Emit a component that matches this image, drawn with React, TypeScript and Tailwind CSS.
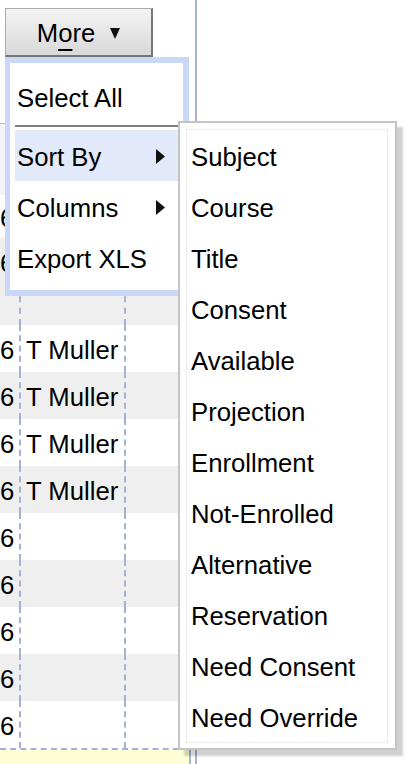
import * as React from "react"

const sortFields = [
  "Subject",
  "Course",
  "Title",
  "Consent",
  "Available",
  "Projection",
  "Enrollment",
  "Not-Enrolled",
  "Alternative",
  "Reservation",
  "Need Consent",
  "Need Override",
]

const rows = [
  { h: "h-[43px]", bg: "bg-white", code: "6", name: "" },
  { h: "h-[47px]", bg: "bg-[#efefef]", code: "6", name: "" },
  { h: "h-[40px]", bg: "bg-[#efefef]", code: "", name: "" },
  { h: "h-[47px]", bg: "bg-white", code: "6", name: "T Muller" },
  { h: "h-[47px]", bg: "bg-[#efefef]", code: "6", name: "T Muller" },
  { h: "h-[47px]", bg: "bg-white", code: "6", name: "T Muller" },
  { h: "h-[47px]", bg: "bg-[#efefef]", code: "6", name: "T Muller" },
  { h: "h-[47px]", bg: "bg-white", code: "6", name: "" },
  { h: "h-[47px]", bg: "bg-[#efefef]", code: "6", name: "" },
  { h: "h-[47px]", bg: "bg-white", code: "6", name: "" },
  { h: "h-[47px]", bg: "bg-[#efefef]", code: "6", name: "" },
  { h: "h-[47px]", bg: "bg-white", code: "6", name: "" },
]

function Arrow() {
  return (
    <svg width="9" height="15" viewBox="0 0 9 15" className="shrink-0 mb-[1px]">
      <polygon points="0,0 9,7.5 0,15" fill="#111" />
    </svg>
  )
}

function MoreMenu() {
  return (
    <div className="absolute left-[5px] top-[57px] w-[184px] border-[6px] border-l-[5px] border-[#cad8f7] bg-white pl-[5px] pt-[6px] pb-[7px]">
      <div className="h-[51px] mt-[2px] px-[2px] pt-[3px] flex items-center">Select All</div>
      <div className="h-[2px] mt-[3px] bg-[#7b7b7b]" />
      <div className="h-[51px] mt-[3px] pl-[2px] pr-[18px] pt-[3px] flex items-center justify-between bg-[#e1e9fb]">
        <span>Sort By</span>
        <Arrow />
      </div>
      <div className="h-[51px] pl-[2px] pr-[18px] pt-[3px] flex items-center justify-between">
        <span>Columns</span>
        <Arrow />
      </div>
      <div className="h-[51px] px-[2px] pt-[3px] flex items-center">Export XLS</div>
    </div>
  )
}

function SortSubmenu() {
  return (
    <div className="absolute left-[178px] top-[121px] w-[219px] border-2 border-[#c4c4c4] bg-white pl-[6px] pr-[7px] pt-[6px] pb-[5px] shadow-[6px_6px_2px_rgba(0,0,0,0.18)]">
      <div className="border border-[#ebebeb]">
        {sortFields.map((f) => (
          <div key={f} className="h-[51px] pl-[4px] pt-[3px] flex items-center whitespace-nowrap">
            {f}
          </div>
        ))}
      </div>
    </div>
  )
}

export default function App() {
  return (
    <div className="relative w-[418px] h-[764px] overflow-hidden bg-white text-[25.7px] text-black font-['Liberation_Sans',Arial,sans-serif]">
      <div className="flex h-full">
        <div className="w-[197px] h-full border-r-2 border-[#a7b3d4] flex flex-col">
          {/* toolbar */}
          <div className="h-[123px] pt-[8px] pl-[5px]">
            <button className="w-[148px] h-[49px] pt-[3px] flex items-center justify-center gap-[15px] border border-[#adadad] border-r-2 border-b-2 border-r-[#767676] border-b-[#767676] bg-linear-to-b from-[#f4f4f4] to-[#d9d9d9]">
              <span>
                M<span className="underline decoration-[2px] underline-offset-[7px]">o</span>re
              </span>
              <svg width="10" height="11" viewBox="0 0 10 11">
                <polygon points="0,0 10,0 5,11" fill="#111" />
              </svg>
            </button>
          </div>

          {/* header */}
          <div className="h-[72px] border-t border-[#b9bccb] bg-[#f3f3f7]" />

          {/* rows */}
          {rows.map((r, i) => (
            <div key={i} className={`${r.h} ${r.bg} flex items-center`}>
              <div className="w-[19px] pr-[5px] pt-[3px] text-right">{r.code}</div>
              <div className="w-[107px] h-full border-x-2 border-dashed border-[#a4b1d2] pl-[5px] pt-[3px] flex items-center whitespace-nowrap">
                {r.name}
              </div>
              <div className="flex-1" />
            </div>
          ))}

          {/* footer */}
          <div className="h-[2px] w-[189px] border-t-2 border-dashed border-[#a4b1d2]" />
          <div className="flex-1 w-[191px] bg-[#fefed6] border-r-2 border-[#a7b3d4]" />
        </div>
        <div className="flex-1" />
      </div>

      <MoreMenu />
      <SortSubmenu />
    </div>
  )
}
